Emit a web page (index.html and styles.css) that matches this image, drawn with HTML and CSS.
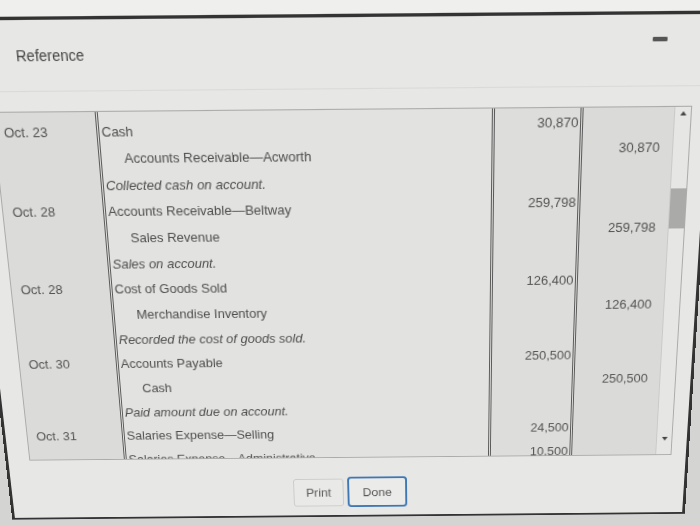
FILE: index.html
```html
<!DOCTYPE html>
<html lang="en">
<head>
    <meta charset="UTF-8">
    <title>Reference</title>
    <link rel="stylesheet" href="styles.css">
</head>
<body>
    <div class="screen">
        <div class="topstrip"></div>
        <div class="dialog">
            <div class="dialog-head">
                <span class="title">Reference</span>
                <span class="minimize"></span>
            </div>

            <div class="ledger">
                <div class="ledger-body">
                    <div class="c-date">Oct. 23</div>
                    <div class="c-acct">Cash</div>
                    <div class="c-dr">30,870</div>
                    <div class="c-cr"></div>

                    <div class="c-date"></div>
                    <div class="c-acct indent">Accounts Receivable—Acworth</div>
                    <div class="c-dr"></div>
                    <div class="c-cr">30,870</div>

                    <div class="c-date"></div>
                    <div class="c-acct memo">Collected cash on account.</div>
                    <div class="c-dr"></div>
                    <div class="c-cr"></div>

                    <div class="c-date">Oct. 28</div>
                    <div class="c-acct">Accounts Receivable—Beltway</div>
                    <div class="c-dr">259,798</div>
                    <div class="c-cr"></div>

                    <div class="c-date"></div>
                    <div class="c-acct indent">Sales Revenue</div>
                    <div class="c-dr"></div>
                    <div class="c-cr">259,798</div>

                    <div class="c-date"></div>
                    <div class="c-acct memo">Sales on account.</div>
                    <div class="c-dr"></div>
                    <div class="c-cr"></div>

                    <div class="c-date">Oct. 28</div>
                    <div class="c-acct">Cost of Goods Sold</div>
                    <div class="c-dr">126,400</div>
                    <div class="c-cr"></div>

                    <div class="c-date"></div>
                    <div class="c-acct indent">Merchandise Inventory</div>
                    <div class="c-dr"></div>
                    <div class="c-cr">126,400</div>

                    <div class="c-date"></div>
                    <div class="c-acct memo">Recorded the cost of goods sold.</div>
                    <div class="c-dr"></div>
                    <div class="c-cr"></div>

                    <div class="c-date">Oct. 30</div>
                    <div class="c-acct">Accounts Payable</div>
                    <div class="c-dr">250,500</div>
                    <div class="c-cr"></div>

                    <div class="c-date"></div>
                    <div class="c-acct indent">Cash</div>
                    <div class="c-dr"></div>
                    <div class="c-cr">250,500</div>

                    <div class="c-date"></div>
                    <div class="c-acct memo">Paid amount due on account.</div>
                    <div class="c-dr"></div>
                    <div class="c-cr"></div>

                    <div class="c-date">Oct. 31</div>
                    <div class="c-acct">Salaries Expense—Selling</div>
                    <div class="c-dr">24,500</div>
                    <div class="c-cr"></div>

                    <div class="c-date"></div>
                    <div class="c-acct">Salaries Expense—Administrative</div>
                    <div class="c-dr">10,500</div>
                    <div class="c-cr"></div>
                </div>
                <div class="scrollbar">
                    <span class="arrow-up"></span>
                    <span class="thumb"></span>
                    <span class="arrow-down"></span>
                </div>
            </div>

            <div class="actions">
                <button class="btn">Print</button>
                <button class="btn primary">Done</button>
            </div>
        </div>
    </div>
</body>
</html>
```

FILE: styles.css
```css
html, body {
    margin: 0;
    height: 100%;
    overflow: hidden;
}
body {
    font-family: "Liberation Sans", Arial, sans-serif;
    background-color: #d4d4d2;
    color: #4f4f4f;
}

.screen {
    width: 700px;
    height: 545px;
    transform-origin: 410px 280px;
    transform: rotate(-0.5deg) perspective(500px) rotateX(-7.15deg);
}
.topstrip {
    height: 28px;
    background-color: #efefed;
}
.dialog {
    box-sizing: border-box;
    width: 715px;
    height: 505px;
    margin-left: -15px;
    border: 3px solid #333;
    border-bottom-width: 2px;
    background-color: #e7e7e5;
}
.dialog-head {
    display: flex;
    align-items: center;
    justify-content: space-between;
    height: 64px;
    padding: 0 42px 0 51px;
    border-bottom: 1px solid #dadad8;
}
.title {
    font-size: 14px;
    color: #454545;
}
.minimize {
    width: 14px;
    height: 4px;
    margin-bottom: 20px;
    border-radius: 1px;
    background-color: #555;
}

.ledger {
    display: flex;
    width: 672px;
    height: 353px;
    box-sizing: border-box;
    margin: 18px 0 0 22px;
    border: 1px solid #ababa9;
}
.ledger-body {
    display: grid;
    grid-template-columns: 98px 380.5px 88.5px 89px;
    grid-auto-rows: 25.67px;
    height: 351px;
    overflow: hidden;
    font-size: 13px;
    line-height: 15px;
}
.ledger-body > div {
    box-sizing: border-box;
    white-space: nowrap;
}
.c-date {
    padding: 10.5px 0 0 9px;
    background-color: #dbdbd9;
    color: #545454;
}
.c-acct {
    padding: 10.5px 0 0 2px;
    border-left: 3px double #5a5a5a;
    background-color: #e2e2e0;
}
.c-acct.indent {
    padding-left: 22px;
}
.c-acct.memo {
    font-style: italic;
}
.c-dr {
    padding: 5.5px 1.5px 0 0;
    text-align: right;
    border-left: 3px double #5a5a5a;
    border-right: 3px double #5a5a5a;
    background-color: #dddddb;
    color: #545454;
}
.c-cr {
    padding: 4.5px 14px 0 0;
    text-align: right;
    background-color: #dadad8;
    color: #545454;
}

.scrollbar {
    display: flex;
    flex-direction: column;
    align-items: center;
    width: 15px;
    border-left: 1px solid #cacac8;
    background-color: #e6e6e4;
}
.arrow-up {
    margin-top: 4px;
    border-left: 3.5px solid transparent;
    border-right: 3.5px solid transparent;
    border-bottom: 4px solid #444;
}
.thumb {
    width: 15px;
    height: 39px;
    margin-top: 69px;
    background-color: #aaaaa8;
}
.arrow-down {
    margin-top: auto;
    margin-bottom: 15px;
    border-left: 3.5px solid transparent;
    border-right: 3.5px solid transparent;
    border-top: 4px solid #444;
}

.actions {
    display: flex;
    justify-content: center;
    align-items: center;
    gap: 4px;
    height: 34px;
    margin-top: 21px;
    padding-left: 5px;
}
.btn {
    font-family: "Liberation Sans", Arial, sans-serif;
    font-size: 13px;
    color: #5a5a5a;
    background-color: #e9e9e7;
    border: 1px solid #cbcbc9;
    border-radius: 3px;
    width: 53px;
    height: 31px;
}
.btn.primary {
    width: 63px;
    height: 34px;
    border: 2px solid #3e77b4;
    border-radius: 4px;
    background-color: #ebebe9;
}
```
